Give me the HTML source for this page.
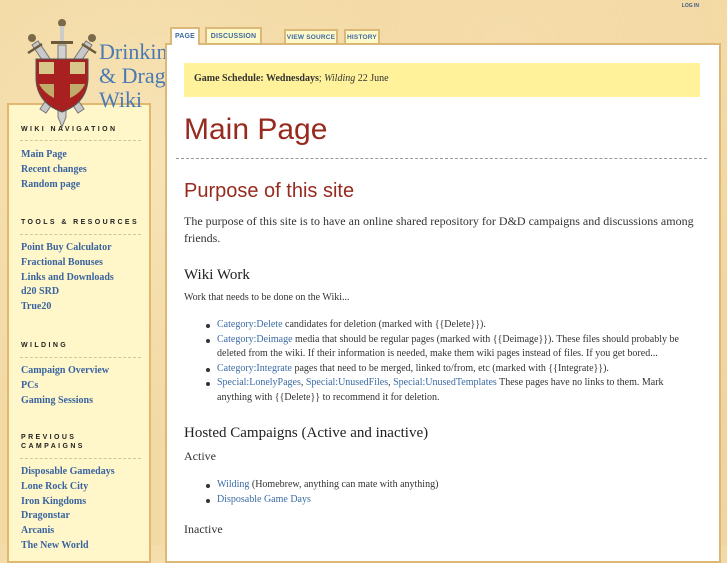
<!DOCTYPE html>
<html><head><meta charset="utf-8"><style>
*{margin:0;padding:0;box-sizing:border-box}
body{width:727px;height:545px;overflow:hidden;position:relative;background:#f3d9a4;background-image:radial-gradient(circle at 20% 30%,#f7e3b5 0,transparent 40%),radial-gradient(circle at 70% 10%,#f5dcaa 0,transparent 35%),radial-gradient(circle at 90% 80%,#f0d39c 0,transparent 40%);font-family:"Liberation Serif",serif}
.a{position:absolute;white-space:nowrap}
a{color:#3a6ba5;text-decoration:none}
#side{position:absolute;left:7px;top:103px;width:144px;height:460px;background:#fff7c9;border:2px solid #e0b870}
.sh{position:absolute;left:12px;font:bold 7px "Liberation Sans",sans-serif;letter-spacing:2.4px;color:#222;line-height:9px}
.sl{position:absolute;left:11px;right:8px;border-top:1px dashed #d8c48e}
.lk{position:absolute;left:12px;font:bold 10px "Liberation Serif",serif;color:#3a64a0;line-height:14.8px}
#content{position:absolute;left:165px;top:43px;width:556px;height:520px;background:#fff;border:2px solid #dcb878}
.tab{position:absolute;background:#fff8c8;border:2px solid #dcb878;border-bottom:none;font:bold 7px "Liberation Sans",sans-serif;color:#3d6aa0;text-align:center;letter-spacing:.2px}
.t{font-size:10px;color:#333;line-height:14.6px}
ul{list-style:none}
li{position:relative;padding-left:33px}
li:before{content:"";position:absolute;left:22px;top:6px;width:4px;height:4px;border-radius:50%;background:#333}
</style></head><body>
<div class="a" style="right:28px;top:3px;font:bold 5px 'Liberation Sans',sans-serif;color:#3a5a88">LOG IN</div>

<div id="side">
<div class="sh" style="top:20px">WIKI NAVIGATION</div>
<div class="sl" style="top:35px"></div>
<div class="lk" style="top:43px">Main Page<br>Recent changes<br>Random page</div>
<div class="sh" style="top:113px">TOOLS &amp; RESOURCES</div>
<div class="sl" style="top:129px"></div>
<div class="lk" style="top:136px">Point Buy Calculator<br>Fractional Bonuses<br>Links and Downloads<br>d20 SRD<br>True20</div>
<div class="sh" style="top:236px">WILDING</div>
<div class="sl" style="top:252px"></div>
<div class="lk" style="top:259px">Campaign Overview<br>PCs<br>Gaming Sessions</div>
<div class="sh" style="top:328px">PREVIOUS<br>CAMPAIGNS</div>
<div class="sl" style="top:353px"></div>
<div class="lk" style="top:360px">Disposable Gamedays<br>Lone Rock City<br>Iron Kingdoms<br>Dragonstar<br>Arcanis<br>The New World</div>
</div>

<svg class="a" style="left:22px;top:17px" width="80" height="112" viewBox="0 0 80 112">
<g stroke="#777" stroke-width="1">
<path d="M10 28 L56 96 L62 92 L16 24Z" fill="#c8c8c8"/>
<path d="M70 28 L24 96 L18 92 L64 24Z" fill="#c8c8c8"/>
<path d="M36 28 L44 28 L44 100 L40 110 L36 100Z" fill="#d0d0d0"/>
</g>
<circle cx="10" cy="21" r="4" fill="#7a6a4a"/><circle cx="70" cy="21" r="4" fill="#7a6a4a"/><circle cx="40" cy="6" r="4" fill="#7a6a4a"/>
<path d="M38 9h4v16h-4z" fill="#ccc"/>
<path d="M29 24h22v3H29z" fill="#6a5a3a"/>
<path d="M6 36l14-9M74 36l-14-9" stroke="#6a5a3a" stroke-width="2.5"/>
<path d="M14 42 L66 42 L66 62 Q65 86 40 95 Q15 86 14 62Z" fill="#a82020" stroke="#555" stroke-width="1"/>
<rect x="17" y="45" width="15" height="12" fill="#d8c78a"/><rect x="48" y="45" width="15" height="12" fill="#d8c78a"/>
<path d="M17 67h15v14q-10-5-15-14z" fill="#c0ab6a"/><path d="M48 67h15q-4 9-15 14z" fill="#c0ab6a"/>
</svg>
<div class="a" style="left:99px;top:40px;font:22px/24px 'Liberation Serif',serif;color:#4a7ab4">Drinking<br>&amp; Dragons<br>Wiki</div>

<div class="tab" style="left:170px;top:27px;width:30px;height:18px;background:#fff;line-height:15px;z-index:2">PAGE</div>
<div class="tab" style="left:205px;top:27px;width:57px;height:16px;line-height:15px">DISCUSSION</div>
<div class="tab" style="left:284px;top:29px;width:54px;height:14px;line-height:14px;font-size:6.5px">VIEW SOURCE</div>
<div class="tab" style="left:344px;top:29px;width:36px;height:14px;line-height:14px;font-size:6.5px">HISTORY</div>

<div id="content"></div>
<div class="a" style="left:184px;top:63px;width:516px;height:34px;background:#fff29a"></div>
<div class="a" style="left:194px;top:73px;font-size:10px;color:#333"><b>Game Schedule: Wednesdays</b>; <i>Wilding</i> 22 June</div>
<div class="a" style="left:184px;top:113px;font:30px 'Liberation Sans',sans-serif;color:#972a1e">Main Page</div>
<div class="a" style="left:176px;top:158px;width:531px;border-top:1px dashed #999"></div>
<div class="a" style="left:184px;top:180px;font:20px 'Liberation Sans',sans-serif;color:#972a1e">Purpose of this site</div>
<div class="a" style="left:184px;top:213px;font-size:12px;line-height:17px;color:#333;white-space:normal;width:520px">The purpose of this site is to have an online shared repository for D&amp;D campaigns and discussions among friends.</div>
<div class="a" style="left:184px;top:267px;font-size:15px;color:#222">Wiki Work</div>
<div class="a t" style="left:184px;top:291px">Work that needs to be done on the Wiki...</div>
<ul class="a t" style="left:184px;top:318px;white-space:normal;width:500px">
<li><a>Category:Delete</a> candidates for deletion (marked with {{Delete}}).</li>
<li><a>Category:Deimage</a> media that should be regular pages (marked with {{Deimage}}). These files should probably be deleted from the wiki. If their information is needed, make them wiki pages instead of files. If you get bored...</li>
<li><a>Category:Integrate</a> pages that need to be merged, linked to/from, etc (marked with {{Integrate}}).</li>
<li><a>Special:LonelyPages</a>, <a>Special:UnusedFiles</a>, <a>Special:UnusedTemplates</a> These pages have no links to them. Mark anything with {{Delete}} to recommend it for deletion.</li>
</ul>
<div class="a" style="left:184px;top:425px;font-size:15px;color:#222">Hosted Campaigns (Active and inactive)</div>
<div class="a" style="left:184px;top:449px;font-size:12px;color:#333">Active</div>
<ul class="a t" style="left:184px;top:478px">
<li><a>Wilding</a> (Homebrew, anything can mate with anything)</li>
<li><a>Disposable Game Days</a></li>
</ul>
<div class="a" style="left:184px;top:522px;font-size:12px;color:#333">Inactive</div>
</body></html>
